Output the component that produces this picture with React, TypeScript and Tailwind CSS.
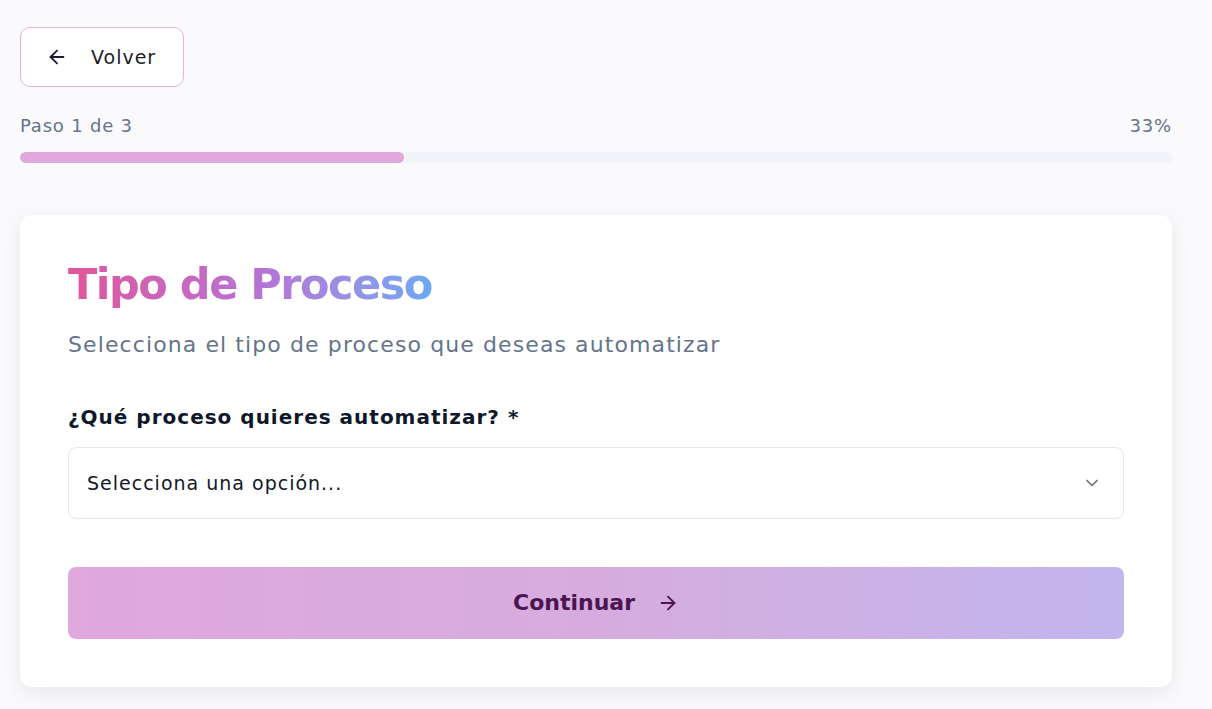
import { ArrowLeft, ArrowRight, ChevronDown } from "lucide-react"

const font = { fontFamily: '"DejaVu Sans", "Noto Sans", sans-serif' }

export default function App() {
  return (
    <div className="min-h-[709px] w-full bg-[#fafafc] text-[#0f172a]" style={font}>
      <div className="ml-5 w-[1152px] pt-[27px]">
        <button className="flex h-[60px] w-[164px] items-center gap-[23px] rounded-[10px] border border-[#e2b4dd] bg-white pl-[25px] text-[19px] font-medium tracking-[1px] text-[#1e1b2e]">
          <ArrowLeft className="h-[22px] w-[22px]" strokeWidth={2} />
          Volver
        </button>

        <div className="mt-[25px] flex items-center justify-between text-[18px] tracking-[0.8px] text-[#64748b]">
          <span>Paso 1 de 3</span>
          <span>33%</span>
        </div>

        <div className="mt-[13px] h-[11px] w-full overflow-hidden rounded-full bg-[#f1f4f8]">
          <div className="h-full w-1/3 rounded-full bg-[#e0a8dc]" />
        </div>

        <div className="mt-[52px] rounded-xl bg-white px-12 pb-12 pt-[43px] shadow-[0_6px_20px_rgba(15,23,42,0.08)]">
          <h1 className="inline-block bg-gradient-to-r from-[#e0559b] via-[#b96fd3] to-[#6aa9f2] bg-clip-text pb-1 text-[43px] font-bold leading-tight tracking-[-1.5px] text-transparent">
            Tipo de Proceso
          </h1>
          <p className="mt-[12px] text-[22px] tracking-[1.1px] text-[#64748b]">
            Selecciona el tipo de proceso que deseas automatizar
          </p>

          <label className="mt-[41px] block text-[20px] font-semibold tracking-[1px] text-[#0f172a]">
            ¿Qué proceso quieres automatizar? *
          </label>
          <div className="mt-[15px] flex h-[72px] items-center justify-between rounded-lg border border-[#e6e8ec] bg-white pl-[18px] pr-[21px]">
            <span className="text-[19px] tracking-[1px] text-[#111827]">Selecciona una opción...</span>
            <ChevronDown className="h-[20px] w-[20px] text-[#6b7280]" strokeWidth={2} />
          </div>

          <button className="mt-12 flex h-[72px] w-full items-center justify-center gap-[22px] rounded-lg bg-gradient-to-r from-[#e0a8dd] via-[#d6acde] to-[#c2b6ee] text-[22px] font-semibold text-[#4a1551]">
            Continuar
            <ArrowRight className="h-[22px] w-[22px]" strokeWidth={2} />
          </button>
        </div>
      </div>
    </div>
  )
}
